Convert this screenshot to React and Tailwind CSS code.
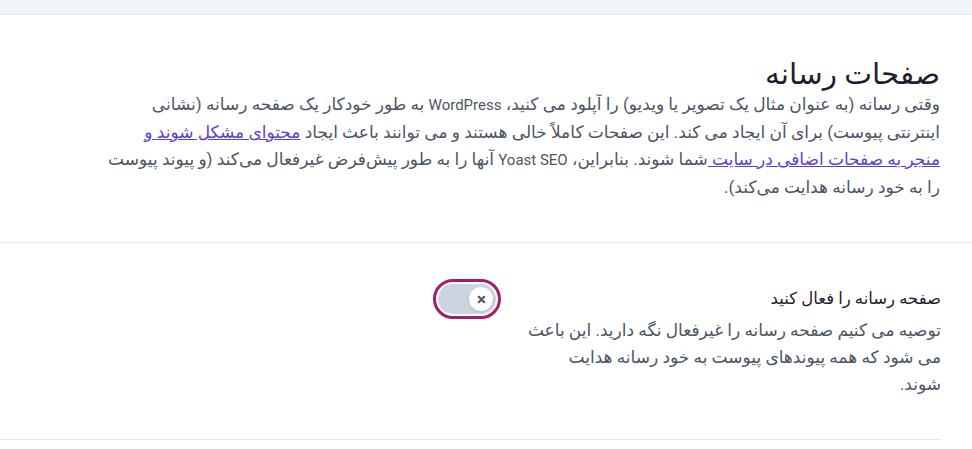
export default function App() {
  const latin = "text-[15px]";
  return (
    <div dir="rtl" className="min-h-[449px] bg-white text-[#4b5563]" style={{ fontFamily: 'Roboto, "Noto Sans", "DejaVu Sans", sans-serif' }}>
      <div className="h-[15px] bg-[#f0f3f8] border-b border-[#e5e7eb]" />
      <section className="pr-[32px] pt-[43px] pb-[41px] border-b border-[#e5e7eb]">
        <h1 className="text-[29.5px] leading-[33px] font-normal text-[#1e1e2f]">صفحات رسانه</h1>
        <p className="w-[834px] text-[17px] leading-[27px]">
          وقتی رسانه (به عنوان مثال یک تصویر یا ویدیو) را آپلود می کنید، <span className={latin}>WordPress</span> به طور خودکار یک صفحه رسانه (نشانی اینترنتی پیوست) برای آن ایجاد می کند. این صفحات کاملاً خالی هستند و می توانند باعث ایجاد{' '}
          <a href="#" className="text-[#5b3fd6] underline">محتوای مشکل شوند و منجر به صفحات اضافی در سایت </a>
          شما شوند. بنابراین، <span className={latin}>Yoast SEO</span> آنها را به طور پیش‌فرض غیرفعال می‌کند (و پیوند پیوست را به خود رسانه هدایت می‌کند).
        </p>
      </section>
      <section className="mr-[31px] border-b border-[#e5e7eb] pt-[44px] pb-[41px]">
        <div className="flex gap-[29px]">
          <div className="w-[416px]">
            <div className="text-[16.5px] leading-[24px] font-medium text-[#1e1e2f]">صفحه رسانه را فعال کنید</div>
            <p className="mt-[6px] text-[17px] leading-[27px]">
              توصیه می کنیم صفحه رسانه را غیرفعال نگه دارید. این باعث می شود که همه پیوندهای پیوست به خود رسانه هدایت شوند.
            </p>
          </div>
          <div className="-mt-[3px]">
            <button className="relative block w-[58px] h-[30px] rounded-full bg-[#cbd5e1] outline outline-[3px] outline-[#a61e69] outline-offset-[2px]">
              <span className="absolute right-[3px] top-[3px] flex h-[24px] w-[24px] items-center justify-center rounded-full bg-white shadow">
                <svg width="9" height="9" viewBox="0 0 10 10" fill="none" stroke="#4b5563" strokeWidth="2.4" strokeLinecap="round">
                  <path d="M2 2L8 8M8 2L2 8" />
                </svg>
              </span>
            </button>
          </div>
        </div>
      </section>
    </div>
  );
}
